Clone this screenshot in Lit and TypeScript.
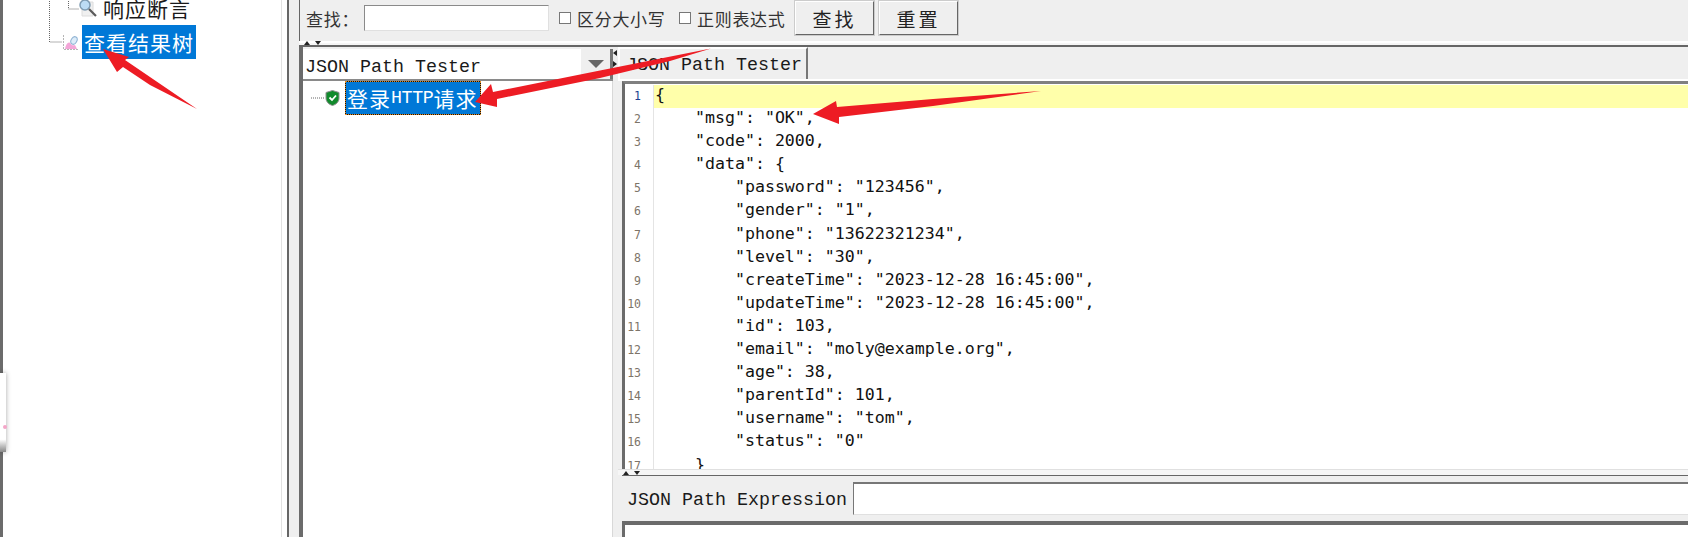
import { LitElement, html, css, svg } from "lit";
import { customElement } from "lit/decorators.js";

const CODE = [
  "{",
  '    "msg": "OK",',
  '    "code": 2000,',
  '    "data": {',
  '        "password": "123456",',
  '        "gender": "1",',
  '        "phone": "13622321234",',
  '        "level": "30",',
  '        "createTime": "2023-12-28 16:45:00",',
  '        "updateTime": "2023-12-28 16:45:00",',
  '        "id": 103,',
  '        "email": "moly@example.org",',
  '        "age": 38,',
  '        "parentId": 101,',
  '        "username": "tom",',
  '        "status": "0"',
  "    }",
];

const upDown = html`<svg class="tri" width="18" height="5" viewBox="0 0 18 5"><path d="M0 5 3 1 6 5Z M11 1H17L14 5Z" fill="#222"/></svg>`;
const leftRight = html`<svg class="tri" width="4" height="18" viewBox="0 0 4 18"><path d="M4 0V6L0 3Z M0 11 4 14 0 17Z" fill="#222"/></svg>`;

@customElement("app-root")
export class AppRoot extends LitElement {
  static styles = css`
    :host { display: flex; width: 1688px; height: 537px; overflow: hidden; position: relative; background: #fff;
      font-family: "Liberation Mono", "Noto Sans CJK SC", monospace; color: #1a1a1a; }
    svg { display: block; flex: none; }
    .cjk { font-family: "Noto Sans CJK SC", sans-serif; font-size: 21px; letter-spacing: 1px; font-weight: 400; }
    .left { flex: none; width: 287px; box-sizing: border-box; border-left: 3px solid #6b6b6b; background: #fff; }
    .tree { box-sizing: border-box; width: 279px; height: 100%; border-right: 1px solid #e2e2e2; padding-left: 46px; overflow: hidden; }
    .row { display: flex; align-items: center; height: 34px; }
    .row.first { margin-top: -9px; }
    .row .txt { margin-left: 6px; line-height: 34px; }
    .sel { box-sizing: border-box; display: flex; align-items: center; background: #0078d7; color: #fff; height: 34px; padding: 0 2px; }
    .row .sel1 { margin-left: 4px; width: 114px; }
    .strip { flex: none; width: 12px; box-sizing: border-box; background: #efefef; border-left: 2px solid #666; }
    .main { flex: 1; min-width: 0; display: flex; flex-direction: column; }
    .toolbar { box-sizing: border-box; height: 41px; background: #efefef; border-left: 1px solid #666; display: flex; align-items: center; padding: 0 0 5px 6px; font-family: "Noto Sans CJK SC", sans-serif; font-size: 17px; letter-spacing: 0.7px; color: #333; }
    .find { width: 58px; }
    .field { box-sizing: border-box; width: 185px; height: 26px; background: #fff; border: 1px solid; border-color: #8a8a8a #e0e0e0 #e0e0e0 #8a8a8a; margin-right: 10px; }
    .cb { box-sizing: border-box; width: 12px; height: 12px; background: #fff; border: 1px solid #777; margin-right: 6px; }
    .lab1 { width: 102px; white-space: nowrap; }
    .lab2 { width: 98px; white-space: nowrap; }
    .btn { box-sizing: border-box; width: 79px; height: 34px; border: 1px solid; border-color: #fff #666 #666 #fff; box-shadow: 0 0 0 1px #ccc; background: #efefef; display: flex; align-items: center; justify-content: center; font-size: 19px; letter-spacing: 3px; color: #222; margin-right: 5px; }
    .hsplit { height: 4px; box-sizing: border-box; background: #f6f6f6; border-top: 2px solid #fff; padding-left: 5px; display: flex; align-items: flex-end; }
    .hsplit .tri { margin-top: -3px; }
    .split { flex: 1; min-height: 0; display: flex; border-top: 2px solid #666; background: #efefef; }
    .lp { flex: none; width: 314px; box-sizing: border-box; border-left: 4px solid #6b6b6b; display: flex; flex-direction: column; }
    .combo { flex: none; height: 34px; box-sizing: border-box; padding-top: 2px; background: #efefef; border-bottom: 2px solid #8a8a8a; }
    .combo-in { height: 30px; display: flex; align-items: center; background: #fff; border-right: 3px solid #777; font-size: 18.33px; padding-left: 2px; }
    .combo-in span { flex: 1; padding-top: 6px; }
    .arrowbtn { width: 29px; height: 30px; background: #efefef; display: flex; align-items: center; justify-content: center; }
    .rtree { flex: 1; background: #fff; border-right: 1px solid #d8d8d8; padding-left: 8px; }
    .rrow { display: flex; align-items: center; height: 34px; }
    .sel2 { margin-left: 5px; width: 136px; border: 1px dotted #e08a20; background: linear-gradient(#0078d7, #0078d7) padding-box, #111; font-size: 18.33px; letter-spacing: -0.4px; white-space: nowrap; padding: 0 0 0 1px; }
    .vs { flex: none; width: 5px; padding-top: 3px; }
    .rp { flex: 1; min-width: 0; display: flex; flex-direction: column; }
    .tabs { flex: none; height: 34px; box-sizing: border-box; display: flex; border-left: 2px solid #fff; border-bottom: 2px solid #fff; background: #efefef; }
    .tab { box-sizing: border-box; width: 188px; height: 32px; border-top: 2px solid #fff; border-right: 2px solid #777; font-size: 18.33px; padding-left: 6px; line-height: 34px; white-space: nowrap; overflow: visible; }
    .editor { flex: none; height: 388px; box-sizing: border-box; margin-left: 4px; border-left: 3px solid #6b6b6b; border-top: 3px solid #808080; background: #fff; display: flex; overflow: hidden; padding-top: 1px; }
    .gutter { flex: none; width: 29px; box-sizing: border-box; border-right: 1px solid #e4e4e4; padding-right: 12px; text-align: right; font: 11.5px/23.1px "DejaVu Sans Mono", monospace; color: #7d7468; }
    .gutter .cur { color: #1c3f8f; }
    .gutter div { height: 23.1px; }
    .code { flex: 1; min-width: 0; font: 16.6px/20px "DejaVu Sans Mono", monospace; color: #111; white-space: pre; }
    .code div { height: 23.1px; padding-left: 1px; }
    .code .cur { background: #ffffaa; }
    .bsplit { flex: none; height: 6px; box-sizing: border-box; margin-left: 0; background: #f6f6f6; border-top: 1px solid #e0e0e0; padding-left: 5px; }
    .expr { flex: none; height: 46px; box-sizing: border-box; margin-left: 4px; background: #efefef; border-top: 1px solid #666; display: flex; align-items: center; padding: 0 0 1px 5px; font-size: 18.33px; white-space: nowrap; }
    .expr span { padding-top: 4px; }
    .expr-in { flex: 1; height: 33px; margin-left: 6px; background: #fff; border: solid; border-width: 2px 0 1px 1px; border-color: #777 #e0e0e0 #e0e0e0 #777; box-sizing: border-box; }
    .out { flex: 1; margin-left: 4px; background: #fff; border-left: 3px solid #6b6b6b; border-top: 4px solid #6b6b6b; }
    .over { position: absolute; left: 0; top: 0; pointer-events: none; }
    .peek { position: absolute; left: 0; top: 373px; width: 6px; height: 79px; background: linear-gradient(#fff 84%, #888); box-shadow: 0 0 5px rgba(0,0,0,.35); }
    .dot { position: absolute; right: -1px; top: 52px; width: 4px; height: 4px; border-radius: 50%; background: #f4a6c8; }
  `;

  render() {
    return html`
      <div class="left"><div class="tree">
        <div class="row first">
          <svg width="30" height="34" viewBox="0 0 30 34"><path d="M.5 0V34M19.5 0V18H30" stroke="#666" stroke-dasharray="1 1" fill="none"/></svg>
          <svg width="18" height="18" viewBox="0 0 18 18" style="margin-top:0px"><path d="M3 3H14V17H3Z" fill="#f0f0f0" stroke="#dcdcdc"/><circle cx="6" cy="6" r="5" fill="#bcdcf4" stroke="#7f9cb2" stroke-width="1.500"/><path d="M10 10 17 17" stroke="#5a5a5a" stroke-width="2.200"/></svg>
          <span class="cjk txt">响应断言</span>
        </div>
        <div class="row">
          <svg width="13" height="34" viewBox="0 0 13 34"><path d="M.5 0V17H13" stroke="#666" stroke-dasharray="1 1" fill="none"/></svg>
          <svg width="16" height="17" viewBox="0 0 16 17"><path d="M1.500 1V15.500H16" stroke="#b5b5b5" stroke-dasharray="2 1" fill="none"/><path d="M3 15C4 9 7 7 9 10 10 12 12 11 13 11L15 15Z" fill="#f3a6d8"/><ellipse cx="12" cy="6.500" rx="2.800" ry="4" transform="rotate(30 12 6.500)" fill="#dcecf9" stroke="#8fb3d4"/></svg>
          <div class="sel sel1"><span class="cjk">查看结果树</span></div>
        </div>
      </div></div>
      <div class="strip"></div>
      <div class="main">
        <div class="toolbar">
          <span class="find">查找：</span>
          <div class="field"></div>
          <div class="cb"></div><span class="lab1">区分大小写</span>
          <div class="cb"></div><span class="lab2">正则表达式</span>
          <div class="btn">查找</div>
          <div class="btn">重置</div>
        </div>
        <div class="hsplit">${upDown}</div>
        <div class="split">
          <div class="lp">
            <div class="combo"><div class="combo-in"><span>JSON Path Tester</span>
              <div class="arrowbtn"><svg width="16" height="8" viewBox="0 0 16 8"><path d="M0 0H16L8 8Z" fill="#666"/></svg></div>
            </div></div>
            <div class="rtree"><div class="rrow">
              <svg width="14" height="4" viewBox="0 0 14 4"><path d="M0 2H14" stroke="#666" stroke-dasharray="1 1"/></svg>
              <svg width="15" height="16" viewBox="0 0 15 16"><path d="M7.500 .5 14 2.500V8C14 12 11 14.500 7.500 15.500 4 14.500 1 12 1 8V2.500Z" fill="#118a2c" stroke="#8f8f8f"/><path d="M4.500 7.500 7 10 11 5.500" stroke="#fff" stroke-width="1.800" fill="none"/></svg>
              <div class="sel sel2"><span class="cjk">登录</span>HTTP<span class="cjk">请求</span></div>
            </div></div>
          </div>
          <div class="vs">${leftRight}</div>
          <div class="rp">
            <div class="tabs"><div class="tab">JSON Path Tester</div></div>
            <div class="editor">
              <div class="gutter">${CODE.map((_, i) => html`<div class=${i === 0 ? "cur" : ""}>${i + 1}</div>`)}</div>
              <div class="code">${CODE.map((l, i) => html`<div class=${i === 0 ? "cur" : ""}>${l}</div>`)}</div>
            </div>
            <div class="bsplit">${upDown}</div>
            <div class="expr"><span>JSON Path Expression</span><div class="expr-in"></div></div>
            <div class="out"></div>
          </div>
        </div>
      </div>
      <div class="peek"><div class="dot"></div></div>
      <svg class="over" width="1688" height="537" viewBox="0 0 1688 537">
        ${svg`<g fill="#ed1c24">
          <path d="M103 49 129 57 125 60 197 109 150 85 123 67 117 72Z"/>
          <path d="M475 102 491 84 493 92 600 70.500 711 48.500 670 61 600 78 497 99 497 107Z"/>
          <path d="M813 114 836 101 837 107 933 99 1041 91 933 106 839 117 839 124Z"/>
        </g>`}
      </svg>
    `;
  }
}
